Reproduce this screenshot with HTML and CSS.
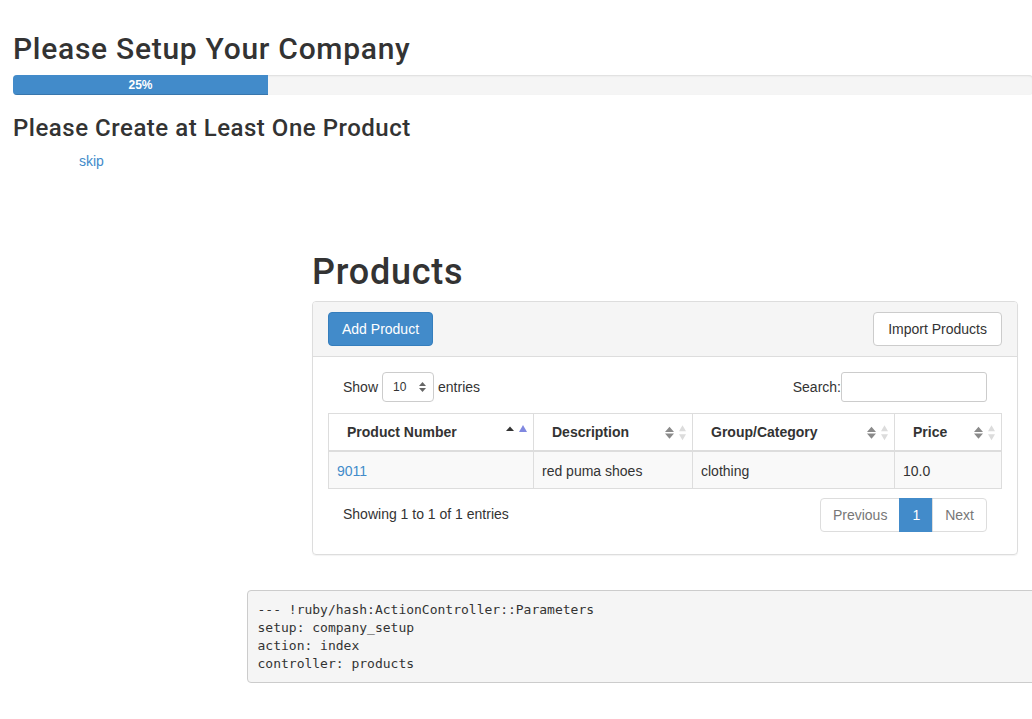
FILE: index.html
```html
<!DOCTYPE html>
<html>
<head>
<meta charset="utf-8">
<title>Company Setup</title>
<link rel="stylesheet" href="styles.css">
</head>
<body>
<div class="setup">
  <h2 class="title">Please Setup Your Company</h2>
  <div class="progress"><div class="progress-bar" style="width:25%">25%</div></div>
  <h3 class="subtitle">Please Create at Least One Product</h3>
  <p class="skip"><a href="#">skip</a></p>
</div>

<div class="products">
  <h1 class="products-title">Products</h1>
  <div class="panel">
    <div class="panel-heading">
      <a class="btn btn-primary" href="#">Add Product</a>
      <a class="btn btn-default" href="#">Import Products</a>
    </div>
    <div class="panel-body">
      <div class="dt-controls">
        <label class="dt-length">Show
          <span class="select-sm">10
            <svg class="select-arrows" width="7" height="10" viewBox="0 0 7 10"><path d="M3.5 0 L7 4 L0 4 Z M0 6 L7 6 L3.5 10 Z" fill="#666"/></svg>
          </span>
          entries</label>
        <label class="dt-filter">Search:<span class="search-input"></span></label>
      </div>
      <table class="dt-table">
        <colgroup><col class="c1"><col class="c2"><col class="c3"><col class="c4"></colgroup>
        <thead>
          <tr>
            <th><div class="th"><span>Product Number</span>
              <svg class="sort" width="22" height="16" viewBox="0 0 22 16"><path d="M4 1.5 L8 6 L0 6 Z" fill="#333"/><path d="M17 0 L21 7 L13 7 Z" fill="#8088e0"/></svg></div></th>
            <th><div class="th"><span>Description</span>
              <svg class="sort" width="22" height="16" viewBox="0 0 22 16"><path d="M4.5 1.7 L9 7 L0 7 Z M0 8.4 L9 8.4 L4.5 13.7 Z" fill="#8a8a8a"/><path d="M17.5 0.3 L21 6.3 L14 6.3 Z M14 9.3 L21 9.3 L17.5 15.3 Z" fill="#dcdcdc"/></svg></div></th>
            <th><div class="th"><span>Group/Category</span>
              <svg class="sort" width="22" height="16" viewBox="0 0 22 16"><path d="M4.5 1.7 L9 7 L0 7 Z M0 8.4 L9 8.4 L4.5 13.7 Z" fill="#8a8a8a"/><path d="M17.5 0.3 L21 6.3 L14 6.3 Z M14 9.3 L21 9.3 L17.5 15.3 Z" fill="#dcdcdc"/></svg></div></th>
            <th><div class="th"><span>Price</span>
              <svg class="sort" width="22" height="16" viewBox="0 0 22 16"><path d="M4.5 1.7 L9 7 L0 7 Z M0 8.4 L9 8.4 L4.5 13.7 Z" fill="#8a8a8a"/><path d="M17.5 0.3 L21 6.3 L14 6.3 Z M14 9.3 L21 9.3 L17.5 15.3 Z" fill="#dcdcdc"/></svg></div></th>
          </tr>
        </thead>
        <tbody>
          <tr>
            <td><a href="#">9011</a></td>
            <td>red puma shoes</td>
            <td>clothing</td>
            <td>10.0</td>
          </tr>
        </tbody>
      </table>
      <div class="dt-footer">
        <div class="dt-info">Showing 1 to 1 of 1 entries</div>
        <ul class="pagination">
          <li class="disabled"><a href="#">Previous</a></li>
          <li class="active"><a href="#">1</a></li>
          <li class="disabled"><a href="#">Next</a></li>
        </ul>
      </div>
    </div>
  </div>
</div>

<pre class="params">--- !ruby/hash:ActionController::Parameters
setup: company_setup
action: index
controller: products</pre>
</body>
</html>
```

FILE: styles.css
```css
html {
  overflow-x: hidden;
}
body {
  margin: 0;
  font-family: "Liberation Sans", Arial, sans-serif;
  font-size: 14px;
  line-height: 20px;
  color: #333;
  background: #fff;
}
a {
  color: #428bca;
  text-decoration: none;
}

/* setup header */
.setup {
  padding-left: 13px;
}
.title {
  margin: 32px 0 10px;
  font-family: Roboto, "Liberation Sans", sans-serif;
  font-size: 30px;
  line-height: 33px;
  font-weight: 500;
  letter-spacing: 0.72px;
}
.progress {
  width: 1020px;
  height: 20px;
  margin-bottom: 20px;
  background: #f5f5f5;
  border-radius: 4px;
  box-shadow: inset 0 1px 2px rgba(0,0,0,.1);
  overflow: hidden;
}
.progress-bar {
  height: 20px;
  background: #428bca;
  color: #fff;
  font-size: 12px;
  font-weight: bold;
  line-height: 20px;
  text-align: center;
  box-shadow: inset 0 -1px 0 rgba(0,0,0,.15);
}
.subtitle {
  margin: 0 0 10px;
  font-family: Roboto, "Liberation Sans", sans-serif;
  font-size: 24px;
  line-height: 26px;
  font-weight: 500;
  letter-spacing: 0.52px;
}
.skip {
  margin: 0;
  padding-left: 66px;
}

/* products */
.products {
  margin: 81px 0 0 312px;
  width: 706px;
}
.products-title {
  margin: 0 0 9px;
  font-family: Roboto, "Liberation Sans", sans-serif;
  font-size: 36px;
  line-height: 40px;
  font-weight: 500;
  letter-spacing: 0.75px;
}
.panel {
  border: 1px solid #ddd;
  border-radius: 4px;
  box-shadow: 0 1px 1px rgba(0,0,0,.05);
}
.panel-heading {
  display: flex;
  justify-content: space-between;
  padding: 10px 15px;
  background: #f5f5f5;
  border-bottom: 1px solid #ddd;
  border-radius: 3px 3px 0 0;
}
.btn {
  display: inline-block;
  font-size: 14px;
  line-height: 20px;
  border: 1px solid transparent;
  border-radius: 4px;
}
.btn-primary {
  background: #428bca;
  border-color: #357ebd;
  color: #fff;
  padding: 6px 13px;
}
.btn-default {
  background: #fff;
  border-color: #ccc;
  color: #333;
  padding: 6px 14px;
}
.panel-body {
  padding: 15px 15px 20px;
}
.dt-controls {
  display: flex;
  justify-content: space-between;
  align-items: flex-start;
  padding: 0 15px;
  height: 35px;
}
.dt-length, .dt-filter {
  display: flex;
  align-items: center;
  height: 30px;
}
.select-sm {
  display: inline-flex;
  align-items: center;
  justify-content: space-between;
  box-sizing: border-box;
  width: 52px;
  height: 30px;
  margin: 0 4px;
  padding: 0 7px 0 10px;
  border: 1px solid #ccc;
  border-radius: 4px;
  font-size: 12px;
  background: #fff;
}
.search-input {
  display: inline-block;
  box-sizing: border-box;
  width: 146px;
  height: 30px;
  border: 1px solid #ccc;
  border-radius: 3px;
  background: #fff;
}
.dt-table {
  width: 673px;
  margin-top: 6px;
  border-collapse: collapse;
  table-layout: fixed;
}
.c1 { width: 205px; }
.c2 { width: 159px; }
.c3 { width: 202px; }
.c4 { width: 107px; }
.dt-table th, .dt-table td {
  border: 1px solid #ddd;
  text-align: left;
  line-height: 20px;
}
.dt-table th {
  padding: 8px 5px 8px 18px;
  font-weight: bold;
  border-bottom-width: 2px;
  vertical-align: bottom;
}
.th {
  display: flex;
  justify-content: space-between;
  align-items: flex-start;
}
.sort {
  margin-top: 3px;
  flex: none;
}
.dt-table td {
  padding: 9px 8px 7px;
  background: #f9f9f9;
}
.dt-footer {
  display: flex;
  justify-content: space-between;
  align-items: flex-start;
  padding: 0 15px;
  margin-top: 6px;
}
.dt-info {
  padding-top: 9px;
}
.pagination {
  display: flex;
  margin: 3px 0 2px;
  padding: 0;
  list-style: none;
}
.pagination li a {
  display: block;
  padding: 6px 12px;
  line-height: 20px;
  border: 1px solid #ddd;
  margin-left: -1px;
  background: #fff;
}
.pagination li:first-child a {
  margin-left: 0;
  border-radius: 4px 0 0 4px;
}
.pagination li:last-child a {
  border-radius: 0 4px 4px 0;
}
.pagination .disabled a {
  color: #777;
}
.pagination .active a {
  background: #428bca;
  border-color: #428bca;
  color: #fff;
}

/* params dump */
.params {
  width: 820px;
  margin: 35px 0 0 247px;
  padding: 9.5px;
  font-family: "DejaVu Sans Mono", Menlo, monospace;
  font-size: 13px;
  line-height: 18px;
  color: #333;
  background: #f5f5f5;
  border: 1px solid #ccc;
  border-radius: 4px;
}
```
